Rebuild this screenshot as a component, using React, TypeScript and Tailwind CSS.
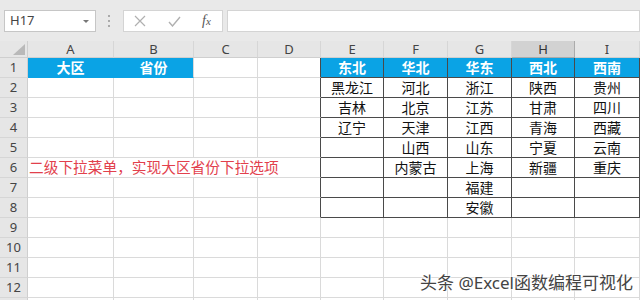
import clsx from "clsx";

const COLS = ["A", "B", "C", "D", "E", "F", "G", "H", "I"];

// region table, columns E..I (index 5..9 in grid)
const TABLE: Record<number, string[]> = {
  5: ["东北", "黑龙江", "吉林", "辽宁"],
  6: ["华北", "河北", "北京", "天津", "山西", "内蒙古"],
  7: ["华东", "浙江", "江苏", "江西", "山东", "上海", "福建", "安徽"],
  8: ["西北", "陕西", "甘肃", "青海", "宁夏", "新疆"],
  9: ["西南", "贵州", "四川", "西藏", "云南", "重庆"],
};

const font = "font-['Noto_Sans','Noto_Sans_CJK_SC',sans-serif]";

const TopBar = () => (
  <div className="flex h-[41px] items-start bg-[#e9e9e9] pt-[10px]">
    <div className="relative ml-[4px] flex h-[22px] w-[92px] items-center border border-[#c6c6c6] bg-white pl-[5px] text-[13px] text-[#444]">
      H17
      <span className="absolute right-[6px] top-[9px] h-0 w-0 border-x-[3px] border-t-[3px] border-x-transparent border-t-[#777]" />
    </div>
    <div className="ml-[12px] mt-[5px] flex flex-col gap-[3px]">
      <span className="h-[2px] w-[2px] bg-[#aaa]" />
      <span className="h-[2px] w-[2px] bg-[#aaa]" />
      <span className="h-[2px] w-[2px] bg-[#aaa]" />
    </div>
    <div className="ml-[13px] flex h-[22px] w-[100px] items-center border border-[#d4d4d4] bg-white">
      <svg className="ml-[10px]" width="12" height="12" viewBox="0 0 12 12">
        <path d="M1 1 L11 11 M11 1 L1 11" stroke="#b0b0b0" strokeWidth="1.2" fill="none" />
      </svg>
      <svg className="ml-[22px]" width="13" height="11" viewBox="0 0 13 11">
        <path d="M1 6 L4.5 10 L12 1" stroke="#b0b0b0" strokeWidth="1.4" fill="none" />
      </svg>
      <span className="ml-[21px] font-['Liberation_Serif',serif] text-[14px] italic leading-none text-[#555]">
        f<span className="text-[11px]">x</span>
      </span>
    </div>
    <div className="ml-[4px] h-[22px] flex-1 border border-[#d4d4d4] bg-white" />
  </div>
);

const HeaderRow = () => (
  <>
    <div className="relative h-[17px] border-r border-b border-[#cfcfcf] bg-[#e6e6e6]">
      <svg className="absolute bottom-[2px] right-[2px]" width="12" height="11" viewBox="0 0 12 11">
        <path d="M12 0 L12 11 L0 11 Z" fill="#b9b9b9" />
      </svg>
    </div>
    {COLS.map((c) => (
      <div
        key={c}
        className={clsx(
          "flex h-[17px] items-center justify-center border-r border-b text-[13px] leading-none",
          c === "H"
            ? "border-[#ababab] bg-[#d2d2d2] text-[#333]"
            : "border-r-[#d6d6d6] border-b-[#cfcfcf] bg-[#e6e6e6] text-[#444]"
        )}
      >
        {c}
      </div>
    ))}
  </>
);

const Cell = ({ r, c }: { r: number; c: number }) => {
  const blue = r === 1 && (c === 1 || c === 2 || c >= 5);
  const darkRight = r <= 8 && c >= 4;
  const darkBottom = r <= 8 && c >= 5;
  let text = "";
  if (r === 1 && c === 1) text = "大区";
  if (r === 1 && c === 2) text = "省份";
  if (c >= 5) text = TABLE[c][r - 1] ?? "";
  return (
    <div
      className={clsx(
        "flex h-[20px] items-center justify-center border-r border-b text-[14px] leading-none",
        blue ? "bg-[#0aa3e5] font-bold text-white" : "bg-white text-[#111]",
        darkRight ? "border-r-[#4a4a4a]" : c === 1 && r === 1 ? "border-r-[#0aa3e5]" : "border-r-[#dadada]",
        darkBottom ? "border-b-[#4a4a4a]" : blue ? "border-b-[#0aa3e5]" : "border-b-[#dadada]"
      )}
    >
      {text}
    </div>
  );
};

const Row = ({ r }: { r: number }) => (
  <>
    <div className="flex h-[20px] items-center justify-center border-r border-b border-r-[#cfcfcf] border-b-[#d6d6d6] bg-[#e6e6e6] text-[13px] leading-none text-[#444]">
      {r <= 12 ? r : ""}
    </div>
    {r === 6 ? (
      <>
        <div className="col-span-4 flex h-[20px] items-center whitespace-nowrap border-r border-b border-r-[#4a4a4a] border-b-[#dadada] bg-white pl-[1px] text-[14.7px] leading-none text-[#e2404c]">
          二级下拉菜单，实现大区省份下拉选项
        </div>
        {[5, 6, 7, 8, 9].map((c) => (
          <Cell key={c} r={r} c={c} />
        ))}
      </>
    ) : (
      [1, 2, 3, 4, 5, 6, 7, 8, 9].map((c) => <Cell key={c} r={r} c={c} />)
    )}
  </>
);

export default function App() {
  const rows = Array.from({ length: 13 }, (_, i) => i + 1);
  return (
    <div className={clsx("relative h-[300px] w-[640px] overflow-hidden bg-white", font)}>
      <TopBar />
      <div className="grid grid-cols-[28px_86px_80px_64px_63px_63px_64px_64px_63px_65px]">
        <HeaderRow />
        {rows.map((r) => (
          <Row key={r} r={r} />
        ))}
      </div>
      <div className="absolute left-[420px] top-[270px] whitespace-nowrap text-[17px] text-[#444] [text-shadow:0_0_2px_#fff,0_0_2px_#fff,0_0_3px_#fff]">
        头条 @Excel函数编程可视化
      </div>
    </div>
  );
}
